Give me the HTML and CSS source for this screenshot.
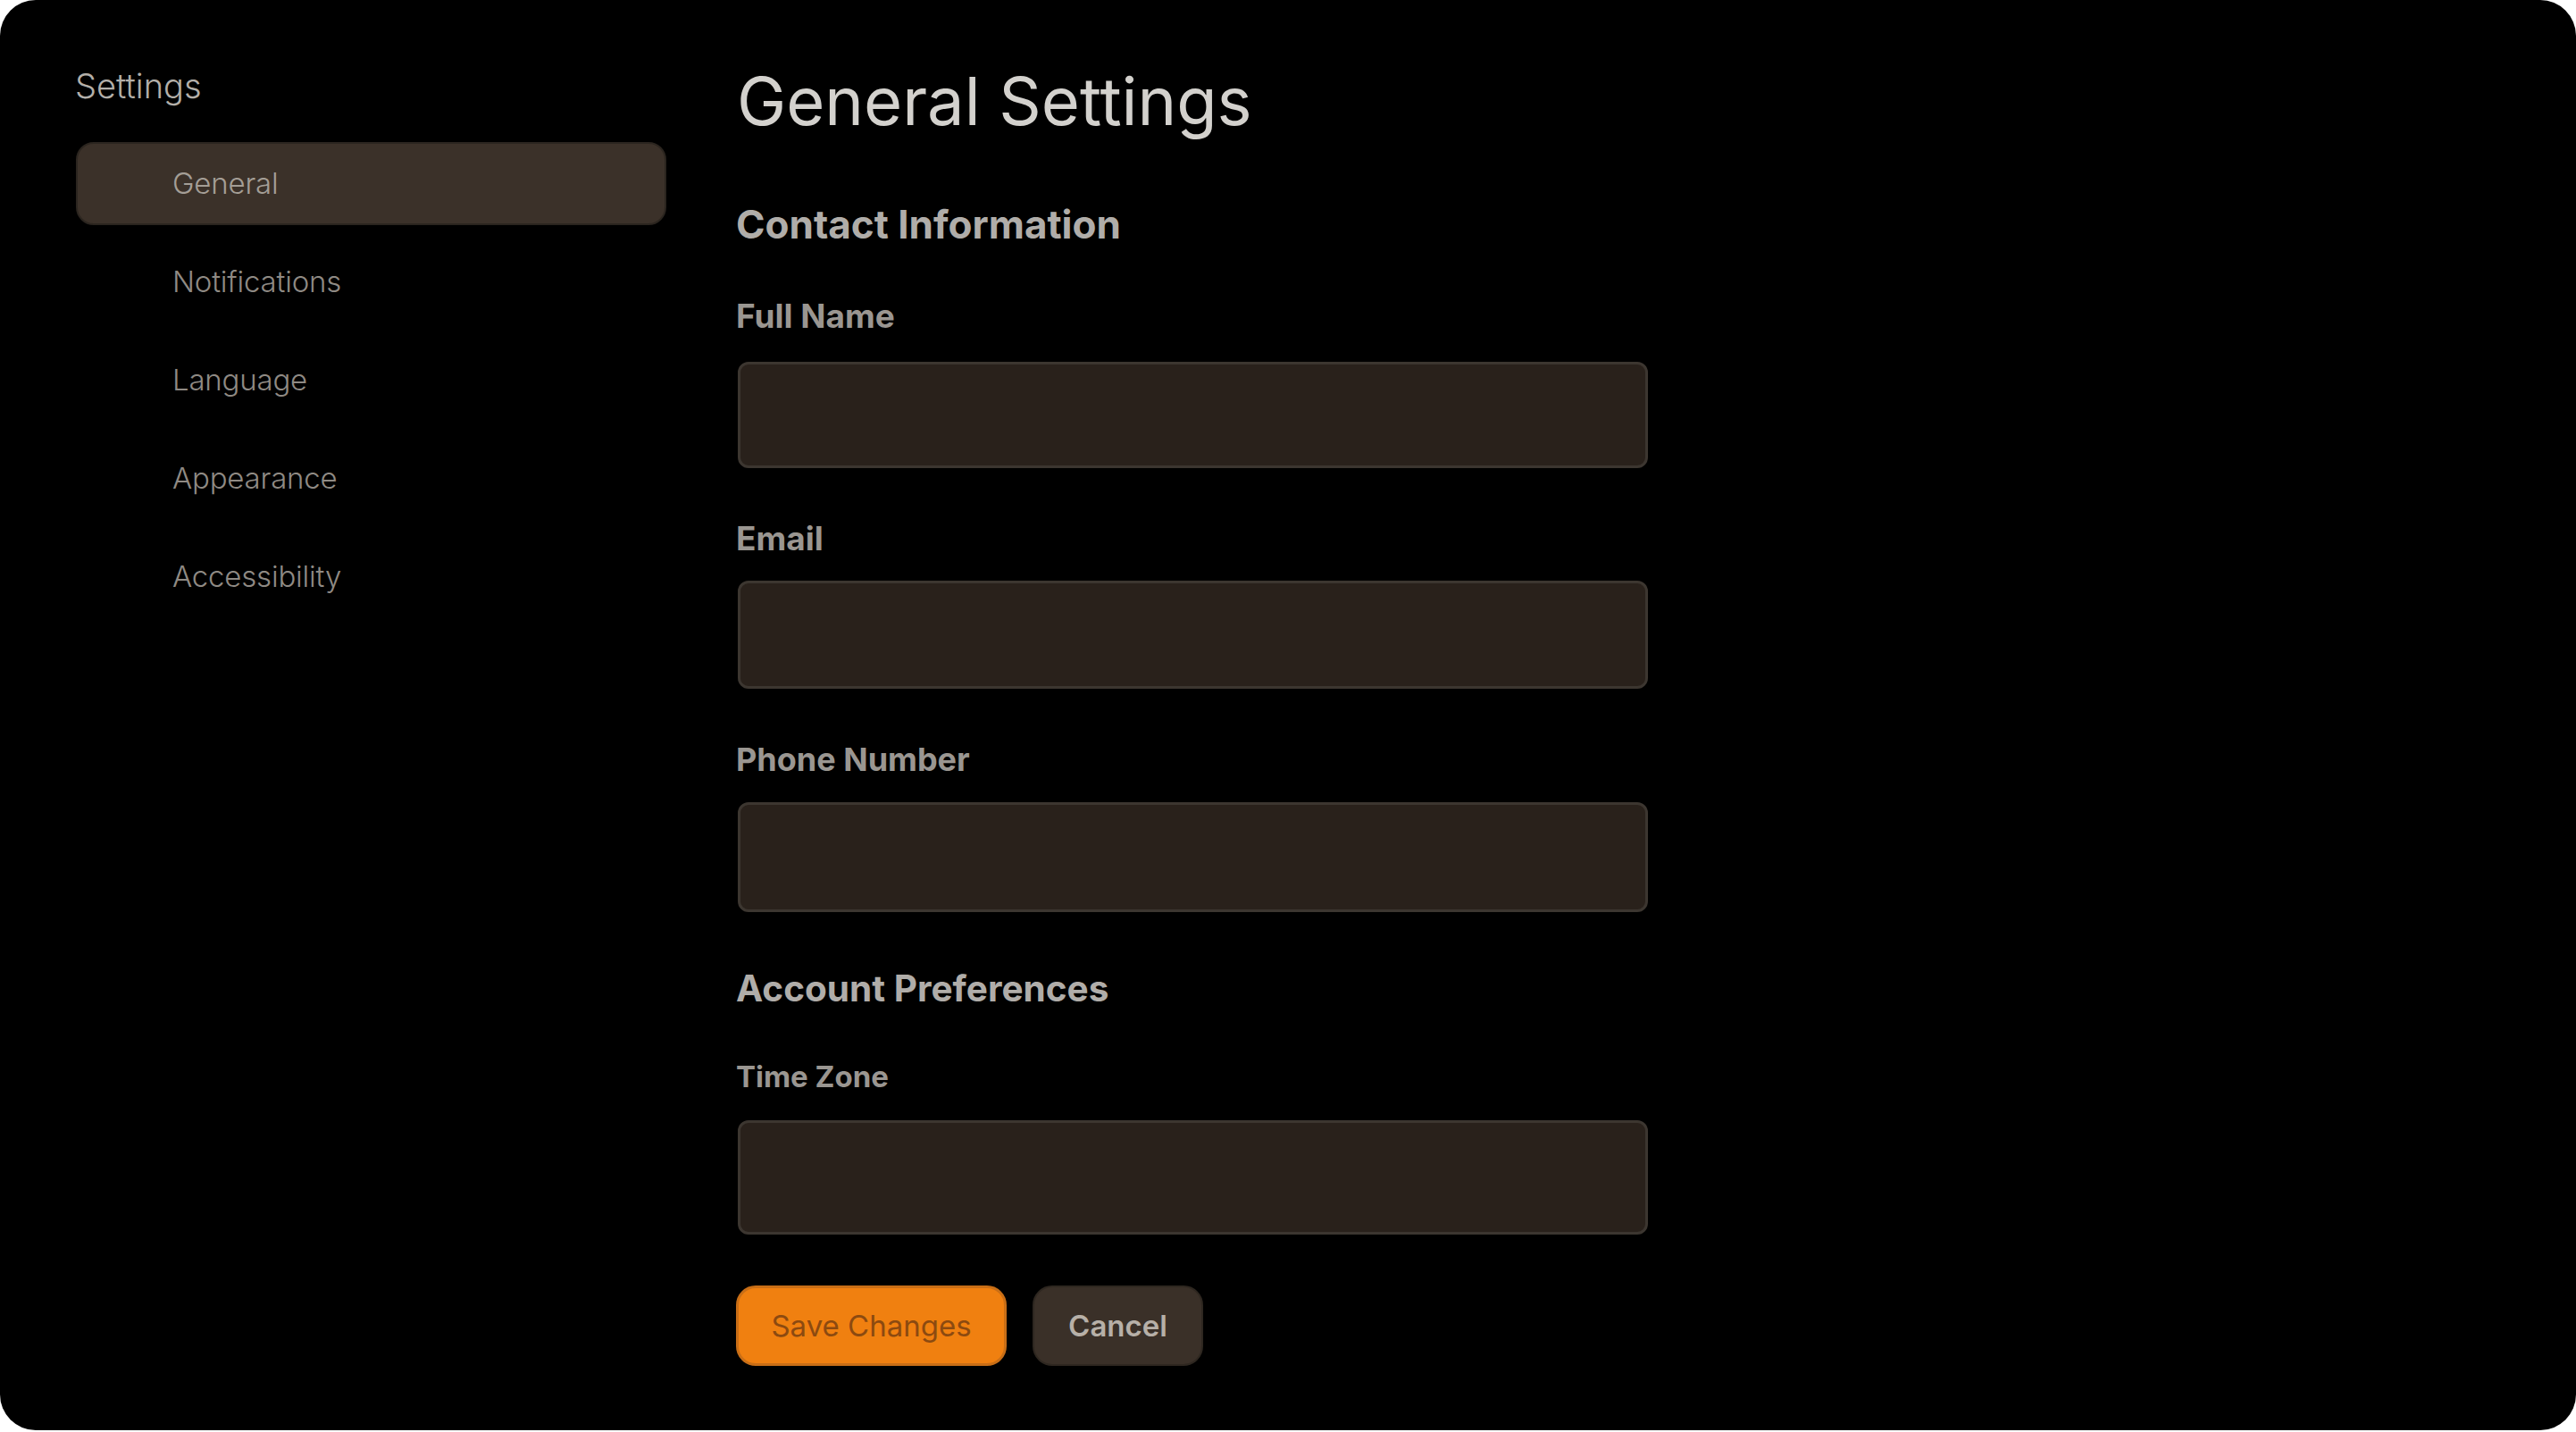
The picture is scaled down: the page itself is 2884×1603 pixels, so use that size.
FILE: index.html
```html
<!DOCTYPE html>
<html lang="en">
<head>
<meta charset="utf-8">
<title>General Settings</title>
<link rel="stylesheet" href="styles.css">
</head>
<body>
<div class="app">
  <aside class="sidebar">
    <div class="sidebar-title">Settings</div>
    <nav class="nav">
      <a class="nav-item nav-item--active">General</a>
      <a class="nav-item">Notifications</a>
      <a class="nav-item">Language</a>
      <a class="nav-item">Appearance</a>
      <a class="nav-item">Accessibility</a>
    </nav>
  </aside>
  <main class="main">
    <h1 class="page-title">General Settings</h1>
    <h2 class="section-title section-title--first">Contact Information</h2>
    <div class="field field--first">
      <label class="field-label field-label--name">Full Name</label>
      <div class="field-input field-input--a"></div>
    </div>
    <div class="field">
      <label class="field-label field-label--wide">Email</label>
      <div class="field-input field-input--b"></div>
    </div>
    <div class="field">
      <label class="field-label">Phone Number</label>
      <div class="field-input field-input--c"></div>
    </div>
    <h2 class="section-title section-title--second">Account Preferences</h2>
    <div class="field field--tz">
      <label class="field-label field-label--small">Time Zone</label>
      <div class="field-input field-input--tall"></div>
    </div>
    <div class="actions">
      <button class="btn btn--primary">Save Changes</button>
      <button class="btn btn--secondary">Cancel</button>
    </div>
  </main>
</div>
</body>
</html>
```

FILE: styles.css
```css
* { box-sizing: border-box; }

html, body {
  margin: 0;
  padding: 0;
  background: #ffffff;
}

body {
  font-family: Inter, "Noto Sans", "Liberation Sans", sans-serif;
}

.app {
  width: 2884px;
  height: 1601px;
  background: #000000;
  border-radius: 40px;
  display: flex;
  overflow: hidden;
}

/* Sidebar */
.sidebar {
  width: 824px;
  flex: none;
  padding: 74px 0 0 85px;
}

.sidebar-title {
  font-size: 38px;
  line-height: 44px;
  font-weight: 300;
  color: #b3afa9;
  margin-left: -1px;
}

.nav {
  margin-top: 41px;
  display: flex;
  flex-direction: column;
  gap: 17px;
  width: 661px;
}

.nav-item {
  display: block;
  height: 93px;
  line-height: 89px;
  padding-left: 106px;
  font-size: 33px;
  font-weight: 300;
  letter-spacing: -0.2px;
  color: #8f8a84;
  border: 2px solid transparent;
  border-radius: 20px;
}

.nav-item--active {
  background: #3b3129;
  border-color: #2b251f;
  color: #a49e96;
}

/* Main */
.main {
  flex: 1;
  padding-top: 69px;
}

.page-title {
  margin: 0;
  font-size: 74px;
  line-height: 88px;
  font-weight: 400;
  color: #d3d1cd;
  padding-left: 1px;
}

.section-title {
  margin: 0;
  font-size: 44px;
  line-height: 48px;
  font-weight: 700;
  color: #b0ada9;
}

.section-title--first { margin-top: 70px; }
.section-title--second { margin-top: 62px; font-size: 40.5px; }

.field {
  margin-top: 58px;
  width: 1021px;
}

.field--first { margin-top: 58px; }
.field--tz { margin-top: 53px; }

.field-label {
  display: block;
  font-size: 36px;
  line-height: 42px;
  font-weight: 700;
  color: #9a9691;
}

.field-label--name { font-size: 37px; }
.field-label--wide { font-size: 37px; }
.field-label--small { font-size: 33px; }

.field-input {
  margin-top: 26px;
  margin-left: 2px;
  height: 121px;
  background: #29211b;
  border: 3px solid #3c3630;
  border-radius: 12px;
}

.field-input--a { margin-top: 30px; height: 119px; }
.field-input--b { height: 121px; }
.field-input--c { margin-top: 27px; height: 123px; }
.field-input--tall { margin-top: 28px; height: 128px; }

/* Actions */
.actions {
  margin-top: 57px;
  display: flex;
  gap: 29px;
}

.btn {
  height: 90px;
  border-radius: 22px;
  font-family: Inter, "Noto Sans", "Liberation Sans", sans-serif;
  font-size: 33px;
  cursor: pointer;
}

.btn--primary {
  width: 303px;
  background: #f08010;
  border: 3px solid #c96e16;
  color: #8c4a10;
  font-weight: 400;
}

.btn--secondary {
  width: 191px;
  background: #3a3028;
  border: 2px solid #2e2720;
  color: #b7b0a8;
  font-weight: 600;
}
```
